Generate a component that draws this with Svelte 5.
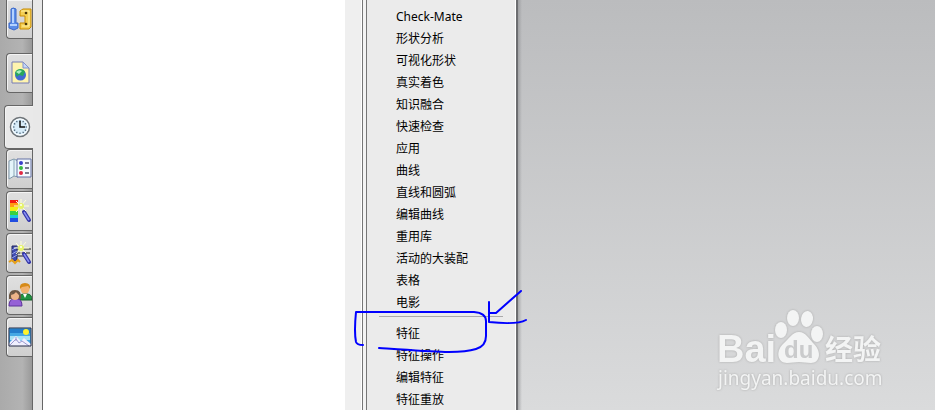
<script lang="ts">
  let toolbars = [
    "Check-Mate", "形状分析", "可视化形状", "真实着色", "知识融合", "快速检查", "应用",
    "曲线", "直线和圆弧", "编辑曲线", "重用库", "活动的大装配", "表格", "电影"
  ]
  let features = ["特征", "特征操作", "编辑特征", "特征重放"]

  let tabs = [
    { id: "assembly", label: "装配导航器" },
    { id: "web", label: "浏览器" },
    { id: "history", label: "历史记录" },
    { id: "materials", label: "系统材料" },
    { id: "visual", label: "可视化" },
    { id: "process", label: "加工向导" },
    { id: "roles", label: "角色" },
    { id: "scene", label: "系统场景" }
  ]
  let active = $state("history")
  let ticks = [0, 30, 60, 90, 120, 150, 180, 210, 240, 270, 300, 330]
</script>

{#snippet wand()}
  <path d="M16 13l5 8" stroke="#3436a8" stroke-width="4" stroke-linecap="round"/>
  <path d="M16 13l5 8" stroke="#8a92f4" stroke-width="1.5"/>
  <path d="M13 0v14M6 7h15M8 2l10 10M18 1L8 13" stroke="#ffffd8" stroke-width="1"/>
  <circle cx="13" cy="7" r="3" fill="#e6f36a"/>
  <circle cx="13" cy="6" r="1" fill="#fff"/>
{/snippet}

<div class="screen">
  <nav class="rail">
    {#each tabs as tab}
      <button class="tab {tab.id}" class:active={active === tab.id} aria-label={tab.label} onclick={() => (active = tab.id)}>
        <svg width="24" height="24" viewBox="0 0 24 24" fill="none">
          {#if tab.id === "assembly"}
            <path d="M3 2q2-2 5 0v14h2v5l-4 2-5-2v-5h2z" fill="#5b8de8" stroke="#3c68c8"/>
            <path d="M5 2v14M2 18h7" stroke="#b4d2ff" stroke-width="2"/>
            <path d="M12 4l3-2h8v18l-2 2h-9v-6h5V9h-5z" fill="#f4cf54" stroke="#c78a00"/>
            <path d="M13 4h8v15h-7" stroke="#fff0a0"/>
            <circle cx="18" cy="6" r="1.3" fill="#4b3606"/>
            <circle cx="18" cy="17" r="1.3" fill="#4b3606"/>
          {:else if tab.id === "web"}
            <path d="M4 1h11l6 6v15H4z" fill="#fff4ae" stroke="#777cb4"/>
            <path d="M15 1v6h6z" fill="#c5d6f8" stroke="#8190ca"/>
            <circle cx="12.500" cy="14" r="5.500" fill="#4268d4"/>
            <path d="M7 12c1-5 9-5 10-1l-2 4-4-1-2 2z" fill="#28a75b"/>
            <path d="M8 11q3-3 6-1l-3 3z" fill="#a9edc1"/>
          {:else if tab.id === "history"}
            <circle cx="12" cy="12" r="9.5" fill="#d8edfa" stroke="#6e7377" stroke-width="1.5"/>
            <circle cx="12" cy="12" r="8" stroke="#fff"/>
            {#each ticks as angle}
              <path d="M12 5v1.5" stroke="#354c60" transform="rotate({angle} 12 12)"/>
            {/each}
            <path d="M12 6v6h5" stroke="#111" stroke-width="1.5"/>
          {:else if tab.id === "materials"}
            <path d="M1 4l5-2 4 2v16l-4-1-5 3z" fill="#e5f5fa" stroke="#8097aa"/>
            <path d="M6 2v17" stroke="#8ba7b6"/>
            <path d="M9 2h14v18H9z" fill="#f5faff" stroke="#6370a4"/>
            <circle cx="13" cy="6" r="2" fill="#3940c9"/>
            <circle cx="13" cy="11" r="2" fill="#39b941"/>
            <circle cx="13" cy="16" r="2" fill="#e02944"/>
            <path d="M17 6h4M17 11h4M17 16h4" stroke="#53566e" stroke-width="1.5"/>
          {:else if tab.id === "visual"}
            <path d="M2 1h8v4H2z" fill="#f21b12"/>
            <path d="M2 4h8v4H2z" fill="#ff9b12"/>
            <path d="M2 8h8v4H2z" fill="#f1ed16"/>
            <path d="M2 12h8v4H2z" fill="#39d13f"/>
            <path d="M2 16h8v3H2z" fill="#19c8dc"/>
            <path d="M2 19h8v4H2z" fill="#214de0"/>
            {@render wand()}
          {:else if tab.id === "process"}
            <path d="M9 8h14M8 12h14M9 15h10" stroke="#222" stroke-width="1.2"/>
            <path d="M4 5h5v15H4z" fill="#404bb1" stroke="#20275d"/>
            <path d="M4 9l5-3M4 13l5-3M4 17l5-3" stroke="#98a6ed"/>
            <path d="M1 21l3-2 3 3 3-3 2 2" stroke="#e6a11b" stroke-width="2"/>
            {@render wand()}
          {:else if tab.id === "roles"}
            <path d="M11 17q0-6 5-6h3q5 0 5 6z" fill="#229342" stroke="#126128"/>
            <path d="M15 11l2 4 2-4z" fill="#fff"/>
            <circle cx="17" cy="6" r="4.5" fill="#f1b16f"/>
            <path d="M12 6q-1-6 5-6 6 0 5 6l-2-3-6 1z" fill="#d68a18"/>
            <path d="M1 23q0-7 5-7h3q5 0 5 7z" fill="#9561d6" stroke="#5d349a"/>
            <path d="M1 16q-1-9 6-9t6 9z" fill="#6d5745"/>
            <circle cx="7" cy="13" r="4" fill="#eeb489"/>
            <path d="M3 12q3 0 5-3l3 3V9L7 8 4 9z" fill="#6d5745"/>
          {:else}
            <path d="M1 3h22v18H1z" fill="#45a8e4"/>
            <path d="M2 4h20v4H2z" fill="#237dcb"/>
            <path d="M2 11h20v4H2z" fill="#a8e1f4"/>
            <circle cx="18" cy="7" r="3" fill="#fff32a"/>
            <path d="M1 18l7-7 5 5 3-3 7 6v2H1z" fill="#f0effe"/>
            <path d="M2 20l6-6 3 4 3-2 7 5M8 12v4" stroke="#9a9ad0"/>
            <path d="M1 3h22v18H1z" stroke="#252b48"/>
          {/if}
        </svg>
      </button>
    {/each}
  </nav>
  <div class="gutter"></div>
  <main class="page"></main>
  <div class="edge"></div>
  <div class="menu" role="menu">
    {#each toolbars as item}
      <button class="item" role="menuitem">{item}</button>
    {/each}
    <hr>
    {#each features as item}
      <button class="item" role="menuitem">{item}</button>
    {/each}
  </div>
  <div class="canvas"></div>

  <svg class="marks" width="180" height="70" viewBox="350 286 180 70" fill="none" aria-hidden="true">
    <path d="M363 345q-6 0-7-3-2-10 0-30h118q12 1 12 9v15q0 10-10 13c-16 5-40 3-97-1"/>
    <path d="M489 302v20q28 3 37-2M490 313h6l25-22"/>
  </svg>

  <div class="watermark">
    <svg width="170" height="60" viewBox="0 0 170 60">
      <text class="bai" x="-1" y="54">Bai</text>
      <g class="paw">
        <ellipse cx="63" cy="22" rx="6" ry="8"/>
        <ellipse cx="75" cy="10" rx="6" ry="8"/>
        <ellipse cx="89" cy="11" rx="6" ry="8" transform="rotate(8 89 11)"/>
        <ellipse cx="99" cy="26" rx="6" ry="8"/>
        <path d="M81 24c7 0 10 7 15 12 8 8 6 19-3 19-5 0-8-1-12-1s-7 1-12 1c-9 0-12-11-4-19 6-5 9-12 16-12z"/>
      </g>
      <text class="du" x="66" y="50">du</text>
      <text class="jingyan" x="107" y="52">经验</text>
    </svg>
    <span class="site">jingyan.baidu.com</span>
  </div>
</div>

<style>
  :global(body) {
    margin: 0;
    overflow: hidden;
  }
  .screen {
    position: relative;
    display: flex;
    height: 100vh;
    overflow: hidden;
    background: #fff;
    font-family: "Noto Sans", "Noto Sans CJK SC", sans-serif;
  }
  .rail {
    box-sizing: border-box;
    width: 33px;
    flex: none;
    display: flex;
    flex-direction: column;
    align-items: flex-end;
    gap: 2px;
    background: linear-gradient(90deg, #aaa, #b3b3b3 70%, #999);
    border-right: 1px solid #666;
  }
  .tab {
    box-sizing: border-box;
    width: 26px;
    height: 40px;
    flex: none;
    display: flex;
    align-items: center;
    padding: 0 0 0 1px;
    border: 1px solid #666;
    border-right: 0;
    border-radius: 4px 0 0 4px;
    background: linear-gradient(#e0e0e0, #cfcfcf);
    box-shadow: inset 1px 1px #f4f4f4;
  }
  .tab svg {
    flex: none;
  }
  .assembly {
    height: 39px;
    border-top: 0;
    border-top-left-radius: 0;
    margin-bottom: 12px;
  }
  .web {
    margin-bottom: 10px;
  }
  .tab.active {
    width: 29px;
    height: 44px;
    margin-right: -1px;
    padding-left: 3px;
    background: #e9e9e9;
  }
  .history {
    margin-bottom: -2px;
  }
  .gutter {
    width: 9px;
    flex: none;
    background: #e8e8e8;
    border-right: 1px solid #666;
  }
  .page {
    flex: 302;
    background: #fff;
  }
  .edge {
    width: 16px;
    flex: none;
    background: #efefef;
    border-right: 1px solid #fff;
  }
  .menu {
    box-sizing: border-box;
    width: 154px;
    flex: none;
    display: flex;
    flex-direction: column;
    padding-top: 6px;
    background: #ebebeb;
    border-left: 1px solid #777;
    border-right: 1px solid #fff;
    box-shadow: inset 3px 0 #f4f4f4, inset 4px 0 #777;
  }
  .item {
    height: 22px;
    flex: none;
    padding: 0 0 0 33px;
    border: 0;
    background: none;
    color: #000;
    font: 12px/22px "Noto Sans", "Noto Sans CJK SC", sans-serif;
    text-align: left;
    white-space: nowrap;
  }
  hr {
    box-sizing: border-box;
    height: 1px;
    flex: none;
    margin: 2px 12px 6px 16px;
    border: 0;
    background: #aaa;
  }
  .canvas {
    flex: 419;
    background:
      linear-gradient(90deg, #6c6d70 2px, #8c8d9099 2px, transparent 6px),
      linear-gradient(#bbbcbe, #dadbdc);
  }
  .marks {
    position: absolute;
    left: 350px;
    top: 286px;
    pointer-events: none;
  }
  .marks path {
    stroke: #00f;
    stroke-width: 2;
    stroke-linecap: round;
    stroke-linejoin: round;
  }
  .watermark {
    position: absolute;
    right: 47px;
    bottom: 22px;
    display: flex;
    flex-direction: column;
    width: 170px;
    color: #f3f4f4;
    filter: drop-shadow(0 0 1px #aaa);
  }
  .watermark svg {
    overflow: visible;
  }
  .paw, .bai, .jingyan {
    fill: #f3f4f4;
  }
  .bai {
    font: bold 38px "Liberation Sans", sans-serif;
  }
  .du {
    font: bold 24px "Liberation Sans", sans-serif;
    fill: #cacbcc;
  }
  .jingyan {
    font: bold 28px "Noto Sans CJK SC", sans-serif;
  }
  .site {
    font-size: 19px;
    line-height: 20px;
  }
</style>
